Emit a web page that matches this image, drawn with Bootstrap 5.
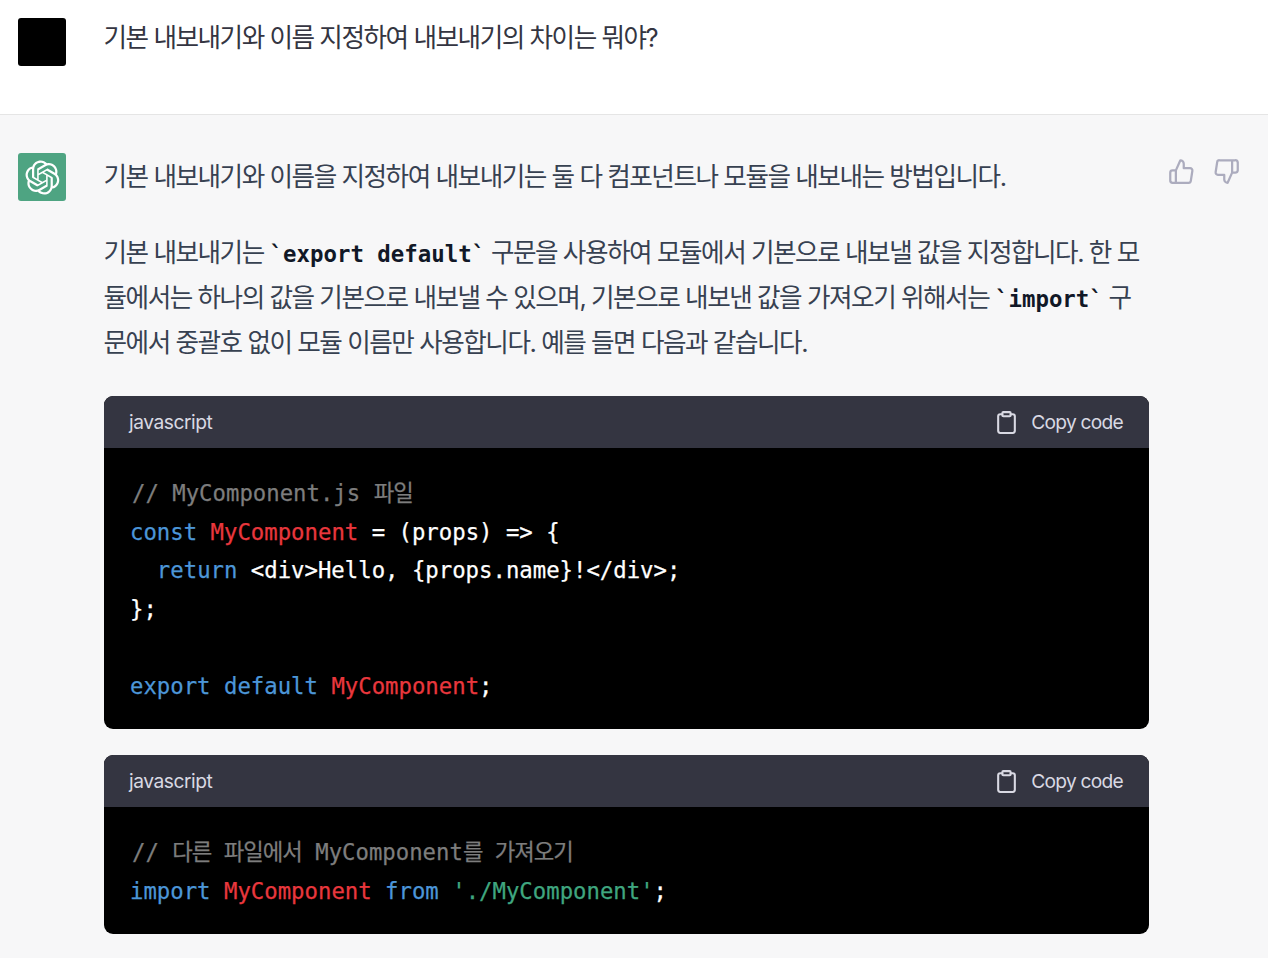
<!DOCTYPE html>
<html lang="ko">
<head>
<meta charset="utf-8">
<title>Chat</title>
<link href="https://cdn.jsdelivr.net/npm/bootstrap@5.3.0/dist/css/bootstrap.min.css" rel="stylesheet">
<style>
html,body{height:958px;overflow:hidden}
body{font-family:"Inter","Noto Sans CJK KR",sans-serif;color:#374151;background:#f7f7f8}
.turn{padding:18px 18px 0 18px;gap:38px}
.turn-user{background:#fff;height:115px;border-bottom:1px solid #e5e5e5}
.turn-bot{padding-top:38px;background:#f7f7f8}
.avatar{width:48px;height:48px;border-radius:3px;flex:none}
.avatar-user{background:#000}
.avatar-bot{background:#4ea482;color:#fff}
.msg{font-size:25.6px;line-height:45px;letter-spacing:-1.47px;color:#374151}
.turn-user .msg{line-height:38px;color:#343541;padding-top:1px;margin-left:-.5px}
.content{width:1045px;flex:none;padding-top:1px}
.msg-para{margin:0 0 31px -.5px}
.msg-para code{font-family:"DejaVu Sans Mono","Noto Sans CJK KR",monospace;font-size:22.4px;line-height:1;font-weight:700;color:#111827;letter-spacing:0}
.actions{gap:18px;margin-left:-19px;padding-top:5px;color:#acacbe}
.code-box{border-radius:9px;overflow:hidden;background:#000;margin-bottom:26px;letter-spacing:0}
.code-head{height:52px;background:#343541;color:#d9d9e3;padding:0 26px 0 25px;font-size:19.2px;letter-spacing:-.45px}
.code-head svg{margin-right:12px}
.copy-btn{letter-spacing:-.75px}
.code-body{margin:0;padding:26px 26px 24px;font-family:"DejaVu Sans Mono","Noto Sans CJK KR",monospace;font-size:22.3px;line-height:38.5px;color:#fff;overflow:hidden;-webkit-text-stroke:.25px currentColor}
.code-body code{font:inherit;color:inherit}
.t-c{color:#7d7d7d;margin-left:2px}.t-k{color:#4c96d8}.t-n{color:#e9373d}.t-s{color:#3fa67f}
.t-ko{letter-spacing:-1px}
</style>
</head>
<body>
<div class="turn turn-user d-flex">
  <div class="avatar avatar-user"></div>
  <div class="msg">기본 내보내기와 이름 지정하여 내보내기의 차이는 뭐야?</div>
</div>
<div class="turn turn-bot d-flex align-items-start">
  <div class="avatar avatar-bot d-flex align-items-center justify-content-center">
    <svg width="35" height="35" viewBox="0 0 41 41" fill="currentColor"><path d="M37.5324 16.8707C37.9808 15.5241 38.1363 14.0974 37.9886 12.6859C37.8409 11.2744 37.3934 9.91076 36.676 8.68622C35.6126 6.83404 33.9882 5.3676 32.0373 4.4985C30.0864 3.62941 27.9098 3.40259 25.8215 3.85078C24.8796 2.7893 23.7219 1.94125 22.4257 1.36341C21.1295 0.785575 19.7249 0.491269 18.3058 0.500197C16.1708 0.495044 14.0893 1.16803 12.3614 2.42214C10.6335 3.67624 9.34853 5.44666 8.6917 7.47815C7.30085 7.76286 5.98686 8.3414 4.8377 9.17505C3.68854 10.0087 2.73073 11.0782 2.02839 12.312C0.956464 14.1591 0.498905 16.2988 0.721698 18.4228C0.944492 20.5467 1.83612 22.5449 3.268 24.1293C2.81966 25.4759 2.66413 26.9026 2.81182 28.3141C2.95951 29.7256 3.40701 31.0892 4.12437 32.3138C5.18791 34.1659 6.8123 35.6322 8.76321 36.5013C10.7141 37.3704 12.8907 37.5973 14.9789 37.1492C15.9208 38.2107 17.0786 39.0587 18.3747 39.6366C19.6709 40.2144 21.0755 40.5087 22.4946 40.4998C24.6307 40.5054 26.7133 39.8321 28.4418 38.5772C30.1704 37.3223 31.4556 35.5506 32.1119 33.5179C33.5027 33.2332 34.8167 32.6547 35.9659 31.821C37.115 30.9874 38.0728 29.9178 38.7752 28.684C39.8458 26.8371 40.3023 24.6979 40.0789 22.5748C39.8556 20.4517 38.9639 18.4544 37.5324 16.8707ZM22.4978 37.8849C20.7443 37.8874 19.0459 37.2733 17.6994 36.1501C17.7601 36.117 17.8666 36.0586 17.936 36.0161L25.9004 31.4156C26.1003 31.3019 26.2663 31.137 26.3813 30.9378C26.4964 30.7386 26.5563 30.5124 26.5549 30.2825V19.0542L29.9213 20.998C29.9389 21.0068 29.9541 21.0198 29.9656 21.0359C29.977 21.052 29.9842 21.0707 29.9867 21.0902V30.3889C29.9842 32.375 29.1946 34.2791 27.7909 35.6841C26.3872 37.0892 24.4838 37.8806 22.4978 37.8849ZM6.39227 31.0064C5.51397 29.4888 5.19742 27.7107 5.49804 25.9832C5.55718 26.0187 5.66048 26.0818 5.73461 26.1244L13.699 30.7248C13.8975 30.8408 14.1233 30.902 14.3532 30.902C14.583 30.902 14.8088 30.8408 15.0073 30.7248L24.731 25.1103V28.9979C24.7321 29.0177 24.7283 29.0376 24.7199 29.0556C24.7115 29.0736 24.6988 29.0893 24.6829 29.1012L16.6317 33.7497C14.9096 34.7416 12.8643 35.0097 10.9447 34.4954C9.02506 33.9811 7.38785 32.7263 6.39227 31.0064ZM4.29707 13.6194C5.17156 12.0998 6.55279 10.9364 8.19885 10.3327C8.19885 10.4013 8.19491 10.5228 8.19491 10.6071V19.808C8.19351 20.0378 8.25334 20.2638 8.36823 20.4629C8.48312 20.6619 8.64893 20.8267 8.84863 20.9404L18.5723 26.5542L15.206 28.4979C15.1894 28.5089 15.1703 28.5155 15.1505 28.5173C15.1307 28.5191 15.1107 28.516 15.0924 28.5082L7.04046 23.8557C5.32135 22.8601 4.06716 21.2235 3.55289 19.3046C3.03862 17.3858 3.30624 15.3413 4.29707 13.6194ZM31.955 20.0556L22.2312 14.4411L25.5976 12.4981C25.6142 12.4872 25.6333 12.4805 25.6531 12.4787C25.6729 12.4769 25.6928 12.4801 25.7111 12.4879L33.7631 17.1364C34.9967 17.849 36.0017 18.8982 36.6606 20.1613C37.3194 21.4244 37.6047 22.849 37.4832 24.2684C37.3617 25.6878 36.8382 27.0432 35.9743 28.1759C35.1103 29.3086 33.9415 30.1717 32.6047 30.6641C32.6047 30.5947 32.6047 30.4733 32.6047 30.3889V21.188C32.6066 20.9586 32.5474 20.7328 32.4332 20.5338C32.319 20.3348 32.154 20.1698 31.955 20.0556ZM35.3055 15.0128C35.2464 14.9765 35.1431 14.9142 35.069 14.8717L27.1045 10.2712C26.906 10.1554 26.6803 10.0943 26.4504 10.0943C26.2206 10.0943 25.9948 10.1554 25.7963 10.2712L16.0726 15.8858V11.9982C16.0715 11.9783 16.0753 11.9585 16.0837 11.9405C16.0921 11.9225 16.1048 11.9068 16.1207 11.8949L24.1719 7.25025C25.4053 6.53903 26.8158 6.19376 28.2383 6.25482C29.6608 6.31589 31.0364 6.78077 32.2044 7.59508C33.3723 8.40939 34.2842 9.53945 34.8334 10.8531C35.3826 12.1667 35.5464 13.6095 35.3055 15.0128ZM14.2424 21.9419L10.8752 19.9981C10.8576 19.9893 10.8423 19.9763 10.8309 19.9602C10.8195 19.9441 10.8122 19.9254 10.8098 19.9058V10.6071C10.8107 9.18295 11.2173 7.78848 11.9819 6.58696C12.7466 5.38544 13.8377 4.42659 15.1275 3.82264C16.4173 3.21869 17.8524 2.99464 19.2649 3.1767C20.6775 3.35876 22.0089 3.93941 23.1034 4.85067C23.0427 4.88379 22.937 4.94215 22.8668 4.98473L14.9024 9.58517C14.7025 9.69878 14.5366 9.86356 14.4215 10.0626C14.3065 10.2616 14.2466 10.4877 14.2479 10.7175L14.2424 21.9419ZM16.071 17.9991L20.4018 15.4978L24.7325 17.9975V22.9985L20.4018 25.4983L16.071 22.9985V17.9991Z"/></svg>
  </div>
  <div class="content msg">
    <p class="msg-para">기본 내보내기와 이름을 지정하여 내보내기는 둘 다 컴포넌트나 모듈을 내보내는 방법입니다.</p>
    <p class="msg-para">기본 내보내기는 <code>`export default`</code> 구문을 사용하여 모듈에서 기본으로 내보낼 값을 지정합니다. 한 모듈에서는 하나의 값을 기본으로 내보낼 수 있으며, 기본으로 내보낸 값을 가져오기 위해서는 <code>`import`</code> 구문에서 중괄호 없이 모듈 이름만 사용합니다. 예를 들면 다음과 같습니다.</p>
    <div class="code-box">
      <div class="code-head d-flex align-items-center justify-content-between"><span>javascript</span><span class="copy-btn d-flex align-items-center"><svg width="25" height="25" viewBox="0 0 24 24" fill="none" stroke="currentColor" stroke-width="2" stroke-linecap="round" stroke-linejoin="round"><path d="M16 4h2a2 2 0 0 1 2 2v14a2 2 0 0 1-2 2H6a2 2 0 0 1-2-2V6a2 2 0 0 1 2-2h2"/><rect x="8" y="2" width="8" height="4" rx="1"/></svg>Copy code</span></div>
      <pre class="code-body"><code><span class="t-c">// MyComponent.js <span class="t-ko">파일</span></span>
<span class="t-k">const</span> <span class="t-n">MyComponent</span> = (props) =&gt; {
  <span class="t-k">return</span> &lt;div&gt;Hello, {props.name}!&lt;/div&gt;;
};

<span class="t-k">export</span> <span class="t-k">default</span> <span class="t-n">MyComponent</span>;</code></pre>
    </div>
    <div class="code-box">
      <div class="code-head d-flex align-items-center justify-content-between"><span>javascript</span><span class="copy-btn d-flex align-items-center"><svg width="25" height="25" viewBox="0 0 24 24" fill="none" stroke="currentColor" stroke-width="2" stroke-linecap="round" stroke-linejoin="round"><path d="M16 4h2a2 2 0 0 1 2 2v14a2 2 0 0 1-2 2H6a2 2 0 0 1-2-2V6a2 2 0 0 1 2-2h2"/><rect x="8" y="2" width="8" height="4" rx="1"/></svg>Copy code</span></div>
      <pre class="code-body"><code><span class="t-c">// <span class="t-ko">다른 파일에서</span> MyComponent<span class="t-ko">를 가져오기</span></span>
<span class="t-k">import</span> <span class="t-n">MyComponent</span> <span class="t-k">from</span> <span class="t-s">'./MyComponent'</span>;</code></pre>
    </div>
  </div>
  <div class="actions d-flex">
    <svg width="27" height="27" viewBox="0 0 24 24" fill="none" stroke="currentColor" stroke-width="2" stroke-linecap="round" stroke-linejoin="round"><path d="M14 9V5a3 3 0 0 0-3-3l-4 9v11h11.28a2 2 0 0 0 2-1.7l1.38-9a2 2 0 0 0-2-2.3zM7 22H4a2 2 0 0 1-2-2v-7a2 2 0 0 1 2-2h3"/></svg>
    <svg width="27" height="27" viewBox="0 0 24 24" fill="none" stroke="currentColor" stroke-width="2" stroke-linecap="round" stroke-linejoin="round"><path d="M10 15v4a3 3 0 0 0 3 3l4-9V2H5.72a2 2 0 0 0-2 1.7l-1.38 9a2 2 0 0 0 2 2.3zm7-13h2.67A2.31 2.31 0 0 1 22 4v7a2.31 2.31 0 0 1-2.33 2H17"/></svg>
  </div>
</div>
<script src="https://cdn.jsdelivr.net/npm/bootstrap@5.3.0/dist/js/bootstrap.bundle.min.js"></script>
</body>
</html>
